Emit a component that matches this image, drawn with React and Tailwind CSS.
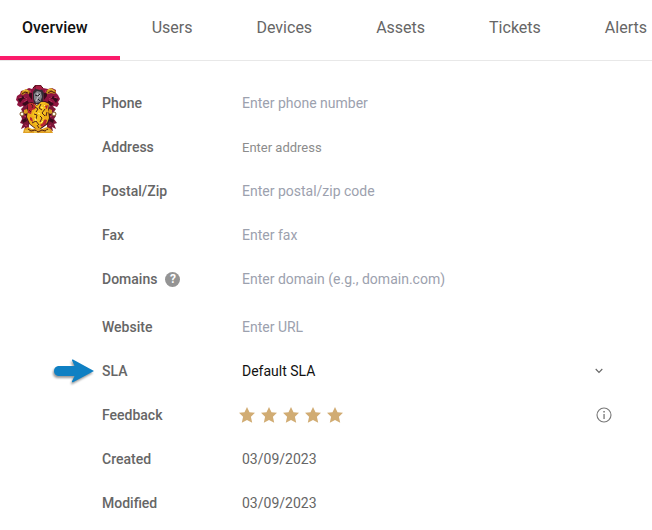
import React from "react";

const tabs = ["Overview", "Users", "Devices", "Assets", "Tickets", "Alerts"];

function Crest() {
  return (
    <svg viewBox="0 0 44 48" className="h-12 w-11" role="img" aria-label="Company crest">
      {/* red mantling */}
      <path
        d="M16 4L13 3 9 5 5 6 4 9 1 11 0 15 2 17 1 20 4 22 7 21 9 24 12 22 12 19H33L35 23 38 21 41 22 43 19 42 17 44 14 42 10 40 8 40 5 36 3 32 4 27 3 25 0H19Z"
        fill="#8f1540"
      />
      {/* supporters */}
      <path
        d="M8 21l5 1v22l-5 2 1-4-4 2 2-5-3-1 2-4-1-3 2-3-2-4zM36 21l-5 1v22l6 2-1-4 4 2-2-5 3-1-3-4 2-3-3-3 3-4z"
        fill="#7d1738"
      />
      {/* dark folds */}
      <path
        d="M2 14l4-3 5 2-4 1-3 4zM6 19l5-4 2 3-4 3zM13 6l3 2v7l-3-4zM42 14l-4-3-5 2 4 1 3 4zM38 19l-5-4-2 3 4 3zM31 6l-3 2v7l3-4zM6 35l4-2 1 3-4 2zM38 35l-4-2-1 3 4 2zM9 27h3v3H9zM32 27h3v3h-3z"
        fill="#380a1b"
      />
      <path
        d="M3 13l3-1M8 12l3 2M8 17l3-2M14 5l1 3M41 13l-3-1M36 12l-3 2M36 17l-3-2M30 5l-1 3M8 31l3 1M36 31l-3 1M9 40l2 1M35 40l-2 1"
        stroke="#c0305c"
        fill="none"
      />
      {/* gold tufts */}
      <path d="M5 9l1-3 4-2 4 2-1 3-3-1-3 2zM30 8l1-3 4-2 5 3-1 3-4-1-3 1z" fill="#c98f1c" />
      <path d="M7 6l3-1 2 1M32 5l3-1 3 2" stroke="#edc347" fill="none" />
      <path d="M6 9l3-2 3 1M32 8l3-2 4 2M17 3l2-2h6l2 2" stroke="#451510" fill="none" />
      {/* helmet */}
      <path d="M17 7l3-4h5l3 5-1 9-4 3-5-2-1-5z" fill="#332b33" />
      <path d="M20 1h5l2 3-3 1-4-1z" fill="#a91e45" />
      <path d="M18 9l3-3 4 1 1 5-2 5-4 1-2-4z" fill="#85848b" />
      <path d="M21 8l1 4-2 4M24 9l-1 3" stroke="#c8c7cd" fill="none" />
      <path d="M19 10l3 1 2-2M22 14l2 2" stroke="#26222a" fill="none" />
      {/* shield */}
      <path d="M12 18l4-1 5 3 4-3 4-1 5 2-1 6 1 9-2 6-10 7-9-7-3-7 1-8z" fill="#3f111b" />
      <path d="M12 19l4-1 5 3 5-4 3 0 4 2-1 6 1 8-2 5-9 7-8-6-3-7 1-8z" fill="#edae18" />
      <path d="M12 19l4-1 4 2-1 4-3 1-1 4-3-1z" fill="#b62332" />
      <path d="M28 34l3 1-1 4-4 3-2-2 3-2zM29 21l3-1-1 4-2-1zM14 32l2 1 1 4-3-2z" fill="#b62332" />
      {/* lion */}
      <path
        d="M18 19l3 2 4-4 4 1-2 3 3 1-2 3 2 3-3 3 2 3-4 4-4 3-4-4 2-5-3-1 2-5 3-3z"
        fill="#f6c21d"
      />
      <path
        d="M15 19l2 2-1 2M19 22l3 2-2 3M25 19l-2 4 3 2M18 29l3 1-1 4M29 24l-3 4 3 3M16 38l4-2 3 4M24 31l2 2-2 4M21 40l2 3M31 27l-1 4M13 25l2 2"
        stroke="#51211a"
        fill="none"
      />
      <path d="M25 22l2 1M22 28l2 1M19 33l1 3M28 20l1 1M27 36l-2 2" stroke="#fff078" fill="none" />
      {/* side ornaments */}
      <circle cx="6" cy="29" r="2" fill="#fffbea" stroke="#7b501d" />
      <circle cx="38" cy="29" r="2" fill="#fffbea" stroke="#7b501d" />
      <path d="M8 25l3-1 1 3-2 2-2-1zM36 25l-3-1-1 3 2 2 2-1z" fill="#dc9c1c" />
      {/* base */}
      <path d="M7 48l1-4 4-2 4 2 5-1 5 1 5-2 4 2 2 4z" fill="#e0a024" />
      <path d="M12 44l3 2 4-1 3 2 4-2 3 1 3-2" stroke="#54210f" fill="none" />
      <path d="M9 46h4M18 47h3M30 46h4" stroke="#f7dc6a" fill="none" />
    </svg>
  );
}

function Arrow() {
  return (
    <svg
      viewBox="0 0 44 28"
      className="absolute -left-[50px] top-2 h-7 w-11 drop-shadow-[-1px_2px_1px_rgba(0,0,0,0.4)]"
      aria-hidden="true"
    >
      <path d="M6 9H22.500L20 3.500Q19.600 2 21 2.600L42 14 21 25.200Q19.600 25.800 20 24.200L22.500 19H6Q2 18 2 14T6 9Z" fill="#0f80c3" />
    </svg>
  );
}

function Row({ label, htmlFor, extra, className = "", children }) {
  return (
    <div className={`relative flex h-11 items-center ${className}`}>
      <div className="flex w-[140px] shrink-0 items-center gap-2 font-medium text-[#666]">
        {htmlFor ? <label htmlFor={htmlFor}>{label}</label> : <span>{label}</span>}
        {extra}
      </div>
      {children}
    </div>
  );
}

function Field({ id, placeholder, tone = "placeholder:text-[#9ca1ae]" }) {
  return (
    <input
      id={id}
      type="text"
      placeholder={placeholder}
      className={`h-8 min-w-0 flex-1 bg-transparent text-[#111] outline-none ${tone}`}
    />
  );
}

function Star() {
  return (
    <svg viewBox="0 0 16 16" className="size-4" aria-hidden="true">
      <path d="M8 0l2.500 5.200 5.500.6-4.100 3.900 1.300 6L8 13 2.800 15.700l1.300-6L0 5.800l5.500-.6z" fill="#d1ac73" />
    </svg>
  );
}

export default function App() {
  return (
    <div className="min-h-screen overflow-hidden bg-white font-['Roboto',sans-serif] text-sm">
      <nav className="flex overflow-hidden border-b border-[#e8e8e8]">
        {tabs.map((tab, i) => (
          <button
            key={tab}
            type="button"
            className={`h-15 shrink-0 border-b-4 pr-8 text-base ${
              i === 0 ? "border-[#fb1b6b] pl-[22px] font-medium text-[#111]" : "border-transparent pl-8 text-[#666]"
            }`}
          >
            {tab}
          </button>
        ))}
      </nav>
      <main className="flex pt-5 pr-10">
        <div className="w-[102px] shrink-0 pt-1 pl-4">
          <Crest />
        </div>
        <div className="min-w-0 flex-1">
          <Row label="Phone" htmlFor="phone">
            <Field id="phone" placeholder="Enter phone number" />
          </Row>
          <Row label="Address" htmlFor="address">
            <Field id="address" placeholder="Enter address" tone="text-[13px] placeholder:text-[#8c8c8c]" />
          </Row>
          <Row label="Postal/Zip" htmlFor="postal">
            <Field id="postal" placeholder="Enter postal/zip code" />
          </Row>
          <Row label="Fax" htmlFor="fax">
            <Field id="fax" placeholder="Enter fax" />
          </Row>
          <Row
            label="Domains"
            htmlFor="domains"
            extra={
              <button
                type="button"
                aria-label="Help"
                className="flex size-[15px] items-center justify-center rounded-full bg-[#949494] text-xs font-bold text-white"
              >
                ?
              </button>
            }
          >
            <Field id="domains" placeholder="Enter domain (e.g., domain.com)" />
          </Row>
          <Row label="Website" htmlFor="website" className="mt-1">
            <Field id="website" placeholder="Enter URL" />
          </Row>
          <Row label="SLA" htmlFor="sla">
            <Arrow />
            <div className="relative flex flex-1 items-center">
              <select id="sla" className="h-8 w-full appearance-none bg-transparent text-[#111] outline-none">
                <option>Default SLA</option>
              </select>
              <svg viewBox="0 0 8 6" className="pointer-events-none absolute right-[9px] h-1.5 w-2" aria-hidden="true">
                <path d="M.7 1L4 4.400 7.300 1" fill="none" stroke="#666" strokeWidth="1.100" />
              </svg>
            </div>
          </Row>
          <Row label="Feedback">
            <div className="-ml-[3px] flex flex-1 gap-1.5" role="img" aria-label="5 out of 5 stars">
              <Star />
              <Star />
              <Star />
              <Star />
              <Star />
            </div>
            <button type="button" aria-label="Feedback information">
              <svg viewBox="0 0 16 16" className="size-4" aria-hidden="true">
                <circle cx="8" cy="8" r="7" fill="none" stroke="#777" strokeWidth="1.100" />
                <path d="M7.300 4h1.500v1.500H7.300zM7.400 7h1.300v5H7.400z" fill="#777" />
              </svg>
            </button>
          </Row>
          <Row label="Created">
            <span className="text-[#666]">03/09/2023</span>
          </Row>
          <Row label="Modified">
            <span className="text-[#666]">03/09/2023</span>
          </Row>
        </div>
      </main>
    </div>
  );
}
